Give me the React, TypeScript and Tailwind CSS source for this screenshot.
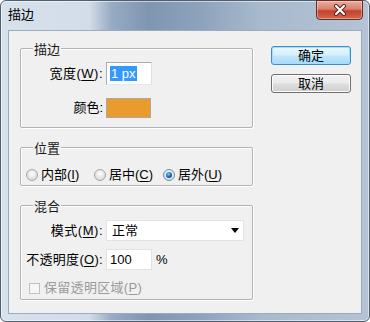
import React from "react";

const U = ({ c }: { c: string }) => <span className="underline underline-offset-2">{c}</span>;

function Radio({ checked }: { checked?: boolean }) {
  return (
    <svg width="12" height="12" viewBox="0 0 12 12" className="shrink-0">
      <defs>
        <radialGradient id="rbg" cx="50%" cy="40%" r="60%">
          <stop offset="0%" stopColor="#ffffff" />
          <stop offset="100%" stopColor="#d6d6d6" />
        </radialGradient>
        <radialGradient id="rdot" cx="40%" cy="35%" r="70%">
          <stop offset="0%" stopColor="#8ed0f8" />
          <stop offset="60%" stopColor="#1b6fb5" />
          <stop offset="100%" stopColor="#0d3f74" />
        </radialGradient>
      </defs>
      <circle cx="6" cy="6" r="5.5" fill="url(#rbg)" stroke={checked ? "#6a8fb3" : "#a8a8a8"} strokeWidth="1" />
      {checked ? <circle cx="6" cy="6" r="3" fill="url(#rdot)" /> : null}
    </svg>
  );
}

function Group({ title, className, children }: { title: string; className: string; children: React.ReactNode }) {
  return (
    <div className={"relative rounded-[2px] border border-[#b3b3b3] shadow-[inset_1px_1px_0_#ffffff,1px_1px_0_#ffffff] " + className}>
      <span className="absolute left-[12px] top-[-7px] bg-[#f0f0f0] px-[1px] text-[13px] leading-[16px] text-[#1a1a1a]">
        {title}
      </span>
      {children}
    </div>
  );
}

export default function App() {
  return (
    <div className="w-[370px] h-[322px] overflow-hidden bg-white">
      <div className="flex h-[322px] w-[370px] flex-col rounded-[6px] border border-[#4f5e70] bg-[linear-gradient(90deg,#d6e1ec_0%,#d2dde9_24%,#97abc3_30%,#7f96b1_40%,#8ea4bd_55%,#a7b9cc_70%,#b4c4d6_100%)] font-['Liberation_Sans','Noto_Sans_CJK_SC',sans-serif] text-black shadow-[inset_0_0_0_1px_rgba(255,255,255,0.55)]">
        {/* title bar */}
        <div className="flex h-[29px] items-start justify-between">
          <span className="ml-[7px] mt-[6px] text-[13px] leading-[16px] text-black">描边</span>
          <div className="mr-[6px] mt-[-1px] flex h-[20px] w-[47px] items-center justify-center rounded-b-[4px] border border-[#6b2b24] bg-[linear-gradient(180deg,#e9ad9f_0%,#d9806f_45%,#c4402c_55%,#cf6a4f_100%)] shadow-[inset_0_0_0_1px_rgba(255,255,255,0.35)]">
            <svg width="14" height="12" viewBox="0 0 14 12">
              <path d="M3 2 L11 10 M11 2 L3 10" stroke="#5a1f19" strokeWidth="4" strokeLinecap="round" />
              <path d="M3 2 L11 10 M11 2 L3 10" stroke="#ffffff" strokeWidth="2.2" strokeLinecap="round" />
            </svg>
          </div>
        </div>
        {/* client */}
        <div className="mx-[7px] flex h-[284px] border border-[#9aabbf] bg-[#f0f0f0] pl-[11px]">
          <div className="flex w-[233px] flex-col pt-[17px]">
            <Group title="描边" className="h-[80px] pt-[13px]">
              <div className="flex h-[23px] items-center">
                <span className="w-[82px] text-right text-[13px] tracking-[0.5px]">
                  宽度(<U c="W" />):
                </span>
                <div className="ml-[3px] flex h-[23px] w-[46px] items-center border border-[#abadb3] border-b-[#e3e9ef] border-r-[#dbdfe6] bg-white pl-[3px]">
                  <span className="bg-[#3399ff] px-[1px] text-[13px] leading-[15px] text-white">1 px</span>
                </div>
              </div>
              <div className="mt-[13px] flex h-[20px] items-center">
                <span className="w-[82px] text-right text-[13px]">颜色:</span>
                <div className="ml-[3px] h-[20px] w-[45px] border border-[#a7a7a7] bg-[#ea9b2e]" />
              </div>
            </Group>

            <Group title="位置" className="mt-[19px] h-[39px] pl-[5px] pt-[19px]">
              <div className="flex h-[16px] items-center text-[13px]">
                <div className="flex w-[68px] items-center gap-[3px]">
                  <Radio />
                  <span>
                    内部(<U c="I" />)
                  </span>
                </div>
                <div className="flex w-[69px] items-center gap-[3px]">
                  <Radio />
                  <span>
                    居中(<U c="C" />)
                  </span>
                </div>
                <div className="flex items-center gap-[3px]">
                  <Radio checked />
                  <span>
                    居外(<U c="U" />)
                  </span>
                </div>
              </div>
            </Group>

            <Group title="混合" className="mt-[19px] h-[95px] pt-[14px]">
              <div className="flex h-[21px] items-center">
                <span className="w-[82px] text-right text-[13px] tracking-[0.5px]">
                  模式(<U c="M" />):
                </span>
                <div className="ml-[3px] flex h-[21px] w-[138px] items-center justify-between border border-[#e2e2e2] bg-white pl-[5px] pr-[4px]">
                  <span className="text-[13px]">正常</span>
                  <svg width="8" height="5" viewBox="0 0 8 5">
                    <path d="M0 0 H8 L4 5 Z" fill="#000" />
                  </svg>
                </div>
              </div>
              <div className="mt-[8px] flex h-[21px] items-center">
                <span className="w-[82px] text-right text-[13px] tracking-[0.3px]">
                  不透明度(<U c="O" />):
                </span>
                <div className="ml-[3px] flex h-[21px] w-[46px] items-center border border-[#e2e2e2] bg-white pl-[3px]">
                  <span className="text-[13px]">100</span>
                </div>
                <span className="ml-[4px] text-[13px]">%</span>
              </div>
              <div className="mt-[12px] flex h-[12px] items-center pl-[8px]">
                <div className="h-[11px] w-[11px] border border-[#c0c0c0] bg-[#f6f6f6]" />
                <span className="ml-[4px] text-[13px] tracking-[0.3px] text-[#9a9a9a]">
                  保留透明区域(<U c="P" />)
                </span>
              </div>
            </Group>
          </div>

          <div className="ml-[18px] flex flex-col pt-[15px]">
            <button className="flex h-[19px] w-[80px] items-center justify-center rounded-[3px] border border-[#3c8fc6] bg-[linear-gradient(180deg,#eaf6fd_0%,#d9f0fc_45%,#bee6fd_55%,#a7d9f5_100%)] text-[13px] leading-none shadow-[inset_0_0_0_1px_#9fe0ff]">
              确定
            </button>
            <button className="mt-[9px] flex h-[19px] w-[80px] items-center justify-center rounded-[3px] border border-[#707070] bg-[linear-gradient(180deg,#f2f2f2_0%,#ebebeb_45%,#dddddd_55%,#cfcfcf_100%)] text-[13px] leading-none shadow-[inset_0_0_0_1px_#fcfcfc]">
              取消
            </button>
          </div>
        </div>
      </div>
    </div>
  );
}
